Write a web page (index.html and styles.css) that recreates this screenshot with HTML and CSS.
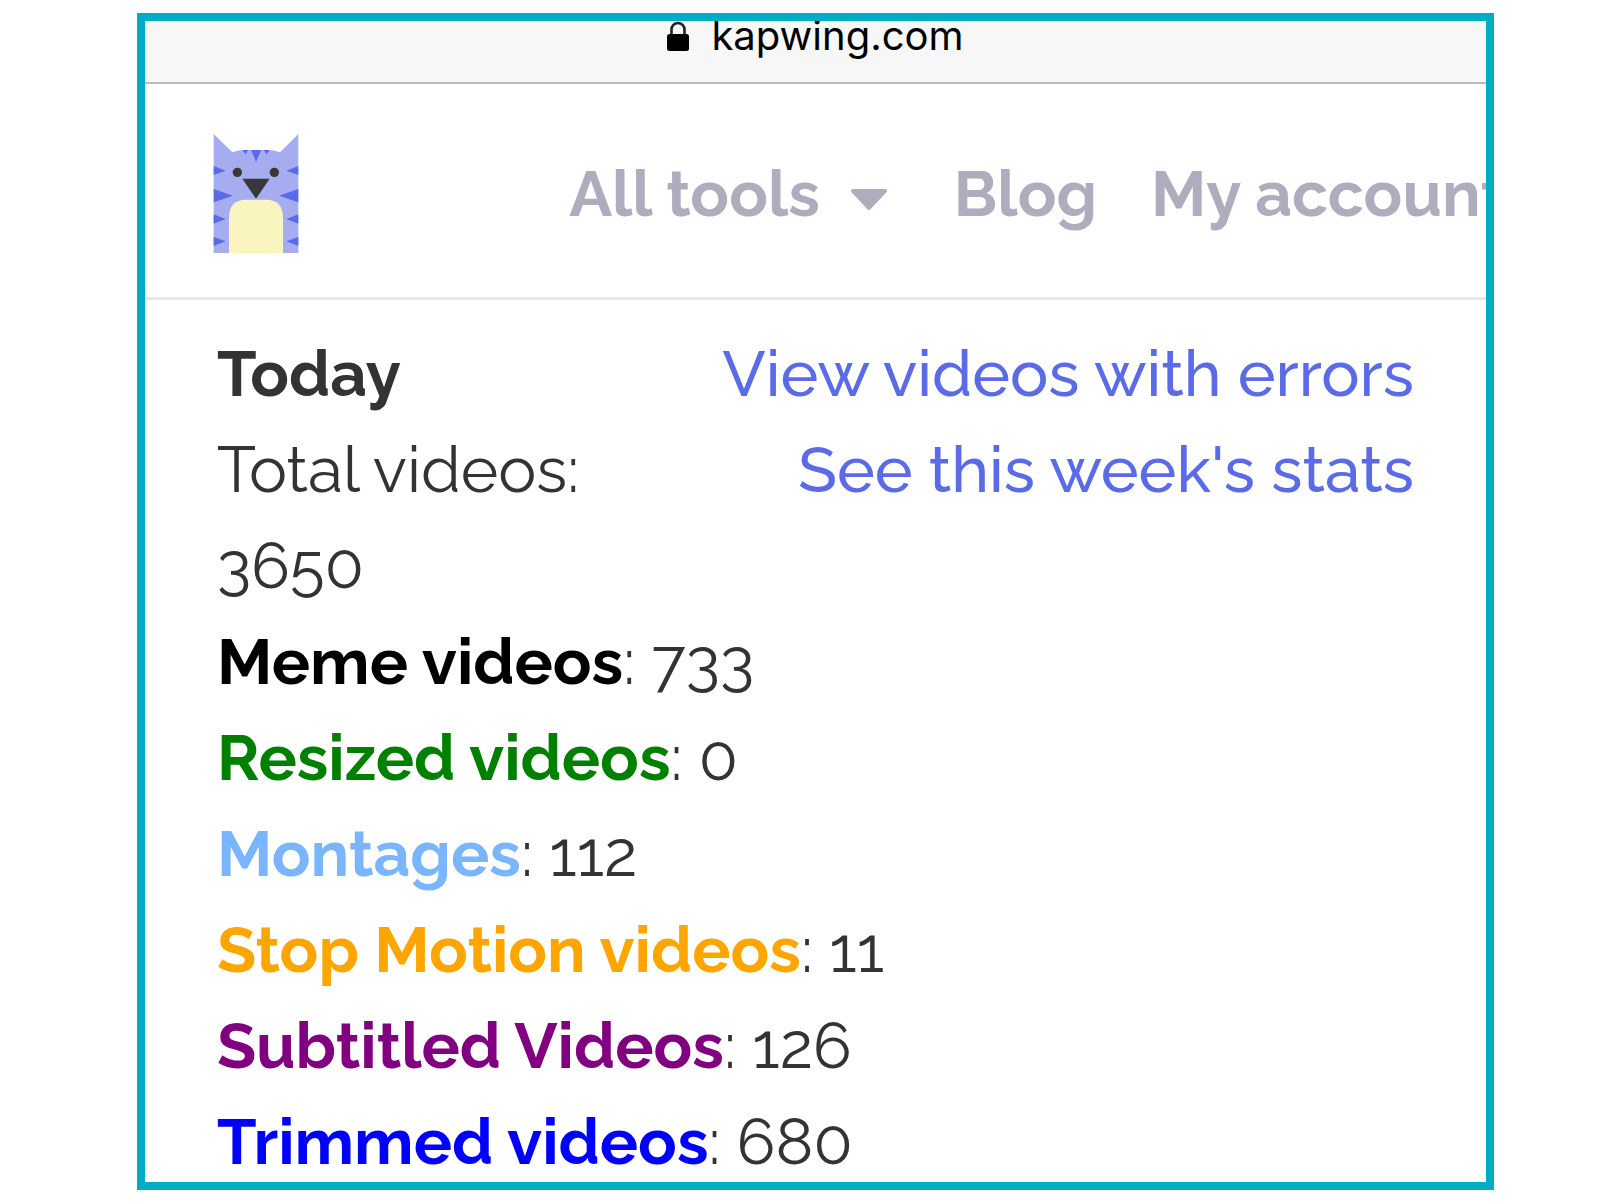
FILE: index.html
```html
<!DOCTYPE html>
<html lang="en">

<head>
    <meta charset="UTF-8">
    <title>Kapwing</title>
    <link rel="stylesheet" href="styles.css">
</head>

<body>
    <div class="screen">
        <div class="address-bar">
            <svg class="lock" viewBox="0 0 22 31" aria-hidden="true">
                <path d="M4.500 15V8.500a6.500 6.500 0 0 1 13 0V15" fill="none" stroke="#222" stroke-width="2.600" />
                <rect x="0" y="13" width="22" height="17" rx="2.500" />
            </svg>
            <span>kapwing.com</span>
        </div>
        <header class="header">
            <a class="logo" href="#" aria-label="Kapwing">
                <svg viewBox="0 0 254 357">
                    <path d="M0 0L56 55Q72 48 95 48H160Q183 48 199 55L254 0V357H0Z" fill="#a5adf0" />
                    <g fill="#5b6be8">
                        <path d="M112 48H143L127 83Z" />
                        <path d="M86 48H104L95 61Z" />
                        <path d="M150 48H168L159 61Z" />
                        <path d="M0 96L36 110L0 123Z" />
                        <path d="M0 165L58 185L0 205Z" />
                        <path d="M0 241L36 255L0 269Z" />
                        <path d="M0 309L36 322L0 336Z" />
                        <path d="M254 96L218 110L254 123Z" />
                        <path d="M254 165L196 185L254 205Z" />
                        <path d="M254 241L218 255L254 269Z" />
                        <path d="M254 309L218 322L254 336Z" />
                    </g>
                    <g fill="#383838">
                        <circle cx="71" cy="115" r="14" />
                        <circle cx="182" cy="115" r="14" />
                        <path d="M86 134H168L127 194Z" />
                    </g>
                    <path d="M46 357V252Q46 197 97 197H157Q208 197 208 252V357Z" fill="#faf5c0" />
                </svg>
            </a>
            <nav class="nav">
                <a class="tools" href="#">All tools
                    <svg class="caret" viewBox="0 0 38 22" aria-hidden="true">
                        <path d="M3 2H35L19 19Z" fill="currentColor" stroke="currentColor" stroke-width="4" stroke-linejoin="round" />
                    </svg>
                </a>
                <a href="#">Blog</a>
                <a href="#">My account</a>
            </nav>
        </header>
        <main class="stats">
            <div class="links">
                <a href="#">View videos with errors</a>
                <a href="#">See this week's stats</a>
            </div>
            <div><b>Today</b></div>
            <div>Total videos: 3650</div>
            <div><b class="meme">Meme videos</b>: 733</div>
            <div><b class="resized">Resized videos</b>: 0</div>
            <div><b class="montage">Montages</b>: 112</div>
            <div><b class="stop-motion">Stop Motion videos</b>: 11</div>
            <div><b class="subtitled">Subtitled Videos</b>: 126</div>
            <div><b class="trimmed">Trimmed videos</b>: 680</div>
        </main>
    </div>
</body>

</html>
```
FILE: styles.css
```css
* {
  box-sizing: border-box;
}

body {
  margin: 0;
  padding: 13px 106px 12px 137px;
  background: #fff;
  color: #333;
  font: 400 64px/96px Raleway, Lato, sans-serif;
}

a {
  color: #5b6be8;
  text-decoration: none;
}

.screen {
  height: calc(100vh - 25px);
  border: 8px solid #00adc4;
  overflow: hidden;
}

.address-bar {
  display: flex;
  justify-content: center;
  gap: 22px;
  height: 63px;
  border-bottom: 2px solid #bbb;
  background: #f7f7f7;
  color: #000;
  font: 400 40px/30px Inter, sans-serif;
}
.lock {
  width: 22px;
  height: 31px;
}

.header {
  display: flex;
  justify-content: space-between;
  align-items: center;
  height: 216px;
  padding: 6px 0 0 68px;
  border-bottom: 3px solid #e6e6ec;
}
.logo svg {
  display: block;
  width: 86px;
  height: 119px;
}
.nav {
  display: flex;
  gap: 54px;
  margin-right: -19px;
  white-space: nowrap;
}
.nav a {
  color: #aeacbd;
  font-weight: 700;
}
.tools {
  display: flex;
  align-items: center;
  gap: 30px;
}
.caret {
  width: 38px;
  height: 22px;
  margin: 12px 12px 0 0;
}

.stats {
  padding: 26px 72px 0;
}
.stats b {
  font-weight: 700;
}
.links {
  float: right;
  text-align: right;
}
.links a {
  display: block;
  font-weight: 500;
}
.meme {
  color: #000;
}
.resized {
  color: #008000;
}
.montage {
  color: #7ab5ff;
}
.stop-motion {
  color: #ffa500;
}
.subtitled {
  color: #800080;
}
.trimmed {
  color: #00f;
}
```
